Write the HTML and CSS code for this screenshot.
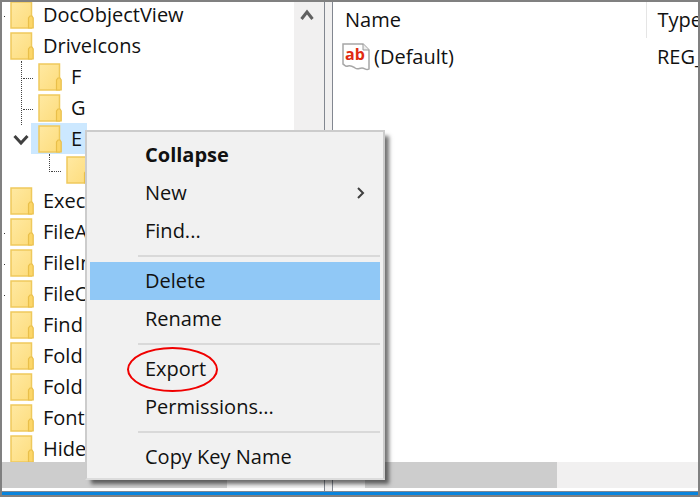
FILE: index.html
```html
<!DOCTYPE html>
<html lang="en">
<head>
  <meta charset="UTF-8">
  <meta name="viewport" content="width=device-width, initial-scale=1.0">
  <title>Registry Editor</title>
  <link rel="stylesheet" href="styles.css">
</head>
<body>
  <!-- shared icons -->
  <svg class="sprite" aria-hidden="true">
    <linearGradient id="paper" x1="0" y1="0" x2="1" y2="1">
      <stop offset="0" stop-color="#ffe9a2"/>
      <stop offset="1" stop-color="#fddc7c"/>
    </linearGradient>
    <symbol id="folder" viewBox="0 0 24 28">
      <path d="M1 1h20.500v26H1z" fill="url(#paper)" stroke="#efc95c" stroke-width="1.500"/>
      <path d="M18.500 27V17l1.500-2h2l1.200 2v10z" fill="#fcd669" stroke="#e9bf4a" stroke-width="1.200"/>
    </symbol>
  </svg>

  <div class="window">
    <div class="panes">
      <div class="tree-pane">
        <div class="tree-view">
          <ul class="tree">
            <li class="tick"><a href="#" class="key"><svg><use href="#folder"/></svg>DocObjectView</a></li>
            <li>
              <a href="#" class="key"><svg><use href="#folder"/></svg>DriveIcons</a>
              <ul class="branch">
                <li class="leaf"><a href="#" class="key"><svg><use href="#folder"/></svg>F</a></li>
                <li class="leaf"><a href="#" class="key"><svg><use href="#folder"/></svg>G</a></li>
                <li>
                  <a href="#" class="key selected"><svg><use href="#folder"/></svg>E</a>
                  <svg class="expander" viewBox="0 0 16 12"><path d="M1.500 2l6.500 7 6.500-7" fill="none" stroke="#404040" stroke-width="3"/></svg>
                  <ul class="branch last">
                    <li class="leaf"><a href="#" class="key" aria-label="Subkey"><svg><use href="#folder"/></svg></a></li>
                  </ul>
                </li>
              </ul>
            </li>
            <li><a href="#" class="key"><svg><use href="#folder"/></svg>Exec</a></li>
            <li class="tick"><a href="#" class="key"><svg><use href="#folder"/></svg>FileA</a></li>
            <li class="tick"><a href="#" class="key"><svg><use href="#folder"/></svg>FileIn</a></li>
            <li class="tick"><a href="#" class="key"><svg><use href="#folder"/></svg>FileO</a></li>
            <li><a href="#" class="key"><svg><use href="#folder"/></svg>Find</a></li>
            <li><a href="#" class="key"><svg><use href="#folder"/></svg>Fold</a></li>
            <li><a href="#" class="key"><svg><use href="#folder"/></svg>Fold</a></li>
            <li><a href="#" class="key"><svg><use href="#folder"/></svg>Font</a></li>
            <li><a href="#" class="key"><svg><use href="#folder"/></svg>Hide</a></li>
          </ul>
          <div class="vscroll">
            <svg viewBox="0 0 14 12"><path d="M1.500 10L7 3l5.500 7" fill="none" stroke="#606060" stroke-width="3"/></svg>
          </div>
        </div>
        <div class="hscroll"><div class="thumb"></div></div>
      </div>

      <div class="splitter"></div>

      <div class="value-pane">
        <div class="value-view">
          <table class="values">
            <thead>
              <tr><th class="name">Name</th><th>Type</th></tr>
            </thead>
            <tbody>
              <tr>
                <td class="name">
                  <div class="value">
                    <svg viewBox="0 0 28 28">
                      <path d="M1 1h20l6 6v19c-3 2-4-1-7-1s-4 2-7 0-4-3-7-2-3-1-5-2z" fill="#fff" stroke="#a6a6a6" stroke-width="1.500"/>
                      <path d="M21 1v6h6" fill="#eee" stroke="#999"/>
                      <text x="3" y="17" class="ab">ab</text>
                    </svg>
                    (Default)
                  </div>
                </td>
                <td>REG_</td>
              </tr>
            </tbody>
          </table>
        </div>
        <div class="hscroll"><div class="thumb"></div></div>
      </div>
    </div>
    <div class="edge"></div>
  </div>

  <div class="menu">
    <button class="bold">Collapse</button>
    <button>New
      <svg viewBox="0 0 8 14"><path d="M1 2l5 5-5 5" fill="none" stroke="#404040" stroke-width="2"/></svg>
    </button>
    <button>Find...</button>
    <hr>
    <button class="active">Delete</button>
    <button>Rename</button>
    <hr>
    <button class="circled">Export</button>
    <button>Permissions...</button>
    <hr>
    <button>Copy Key Name</button>
  </div>
</body>
</html>
```
FILE: styles.css
```css
*,
*::before,
*::after {
  box-sizing: border-box;
}

body {
  margin: 0;
  font-family: "Open Sans", "Noto Sans", sans-serif;
  font-size: 20px;
  line-height: 30px;
  color: #111;
}

.sprite {
  position: absolute;
  width: 0;
  height: 0;
}

.window {
  display: flex;
  flex-direction: column;
  height: 100vh;
  border: 2px solid #808080;
  background: #fff;
  overflow: hidden;
}

.panes {
  flex: 1;
  min-height: 0;
  display: grid;
  grid-template-columns: 322px 9px 1fr;
  grid-template-rows: minmax(0, 1fr);
}

.edge {
  height: 4px;
  background: #0a84dc;
  border-top: 1px solid #7c8794;
}

/* tree */
.tree-pane,
.value-pane {
  display: flex;
  flex-direction: column;
  min-width: 0;
  padding-bottom: 3px;
}

.tree-view {
  flex: 1;
  min-height: 0;
  display: flex;
  overflow: hidden;
}

.tree {
  flex: 1;
  margin: -3px 0 0;
  padding: 0 0 0 5px;
}

.tree,
.tree ul {
  list-style: none;
}

.tree li {
  position: relative;
}

.tree ul {
  position: relative;
  margin: 0;
  padding: 0 0 0 28px;
}

.key {
  display: flex;
  align-items: center;
  gap: 9px;
  width: max-content;
  height: 31px;
  padding: 0 5px 0 3px;
  color: #111;
  text-decoration: none;
}

.key svg {
  width: 24px;
  height: 28px;
}

.key.selected {
  margin-left: -4px;
  padding-left: 7px;
  background: #cce8ff;
}

.expander {
  position: absolute;
  left: -22px;
  top: 11px;
  width: 16px;
  height: 12px;
}

/* dotted lines between parent and child */
.branch::before {
  content: "";
  position: absolute;
  left: 14px;
  top: 0;
  height: 64px;
  border-left: 1px dotted #444;
}

.branch.last::before {
  height: 18px;
}

.leaf::before {
  content: "";
  position: absolute;
  left: -12px;
  top: 17px;
  width: 10px;
  border-top: 1px dotted #444;
}

.tick::before {
  content: "";
  position: absolute;
  left: -3px;
  top: 17px;
  width: 1px;
  height: 1px;
  background: #333;
}

/* scroll bars */
.vscroll {
  width: 30px;
  padding: 7px 6px;
  background: #f1f0f0;
}

.vscroll svg {
  display: block;
  width: 14px;
  height: 12px;
}

.hscroll {
  height: 26px;
  background: #f1f0f0;
}

.thumb {
  width: 70%;
  height: 100%;
  background: #cdcdcd;
}

.splitter {
  border: 1px solid #828790;
  border-width: 0 1px;
  background: #f1f0f0;
}

/* values */
.value-pane .thumb {
  width: 192px;
  margin-left: 32px;
}

.value-view {
  flex: 1;
  overflow: hidden;
}

.values {
  width: 100%;
  table-layout: fixed;
  border-collapse: collapse;
}

.values th,
.values td {
  height: 38px;
  padding: 0 0 0 11px;
  font-weight: normal;
  text-align: left;
}

.values th {
  height: 36px;
}

.values .name {
  width: 313px;
}

.values th.name {
  padding-left: 12px;
  border-right: 1px solid #e5e5e5;
}

.values td.name {
  padding-left: 9px;
}

.value {
  display: flex;
  align-items: center;
  gap: 4px;
}

.value svg {
  width: 28px;
  height: 28px;
}

.ab {
  font: bold 16px "Open Sans", sans-serif;
  fill: #e02b12;
}

/* context menu */
.menu {
  position: absolute;
  left: 85px;
  top: 130px;
  width: 300px;
  padding: 4px 3px 2px;
  border: 2px solid #ccc;
  border-bottom-color: #dcdcdc;
  background: #f1f1f1;
  box-shadow: 5px 5px 4px -1px rgba(0, 0, 0, 0.55);
}

.menu button {
  position: relative;
  display: flex;
  align-items: center;
  justify-content: space-between;
  width: 100%;
  height: 38px;
  padding: 0 15px 0 55px;
  border: 0;
  background: none;
  font: inherit;
  color: #111;
}

.menu button.bold {
  font-weight: bold;
}

.menu button.active {
  background: #90c8f6;
}

.menu button svg {
  width: 8px;
  height: 14px;
}

.menu hr {
  height: 2px;
  margin: 5px 0 5px 48px;
  border: 0;
  background: #d9d9d9;
}

/* red marker around Export */
.circled::after {
  content: "";
  position: absolute;
  left: 37px;
  top: -3px;
  width: 91px;
  height: 45px;
  border: 2px solid #f00000;
  border-radius: 50%;
}
```
